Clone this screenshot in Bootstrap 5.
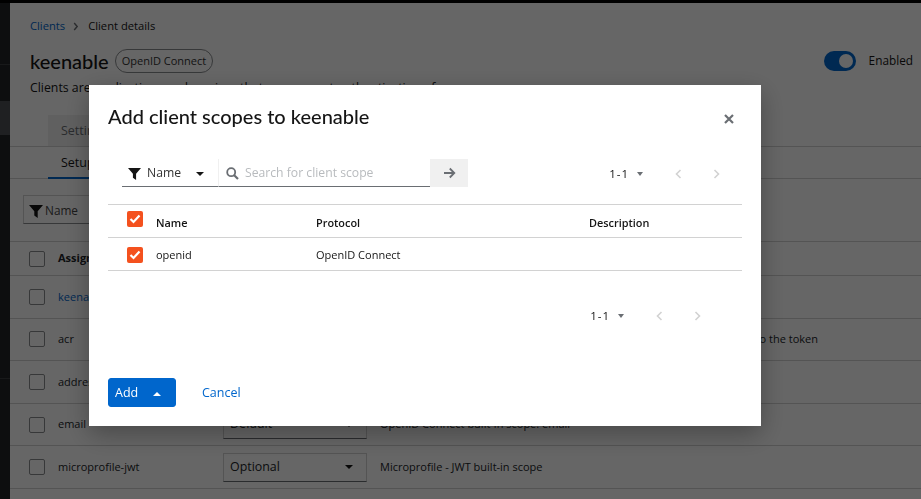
<!DOCTYPE html>
<html lang="en">
<head>
<meta charset="UTF-8">
<meta name="viewport" content="width=device-width, initial-scale=1.0">
<title>Client details</title>
<link href="https://cdn.jsdelivr.net/npm/bootstrap@5.3.3/dist/css/bootstrap.min.css" rel="stylesheet">
<style>
html, body { height: 100%; overflow: hidden; }
body { font-family: "Open Sans", "Liberation Sans", sans-serif; font-size: 12px; color: #151515; background: #fff; }
.top-strip { height: 3px; background: #000; }
.side-nav { width: 10px; background: #212427; flex: none; height: 496px; }
.side-line { border-bottom: 1px solid #3c3f42; height: 62px; }
.side-active { background: #4f5255; height: 34px; margin-top: 36px; }
.side-line-low { border-bottom: 1px solid #3c3f42; height: 244px; }
.page-main { flex: 1 1 auto; min-width: 0; }
.crumbs { padding: 9px 0 0 20px; height: 37px; font-size: 11.2px; line-height: 16px; display: flex; align-items: center; }
.crumbs a, .link-cell { color: #06c; text-decoration: none; }
.crumb-sep { margin: 0 9px 0 8px; line-height: 0; }
.title-row { padding: 7px 8px 0 20px; height: 35px; }
.client-name { font-family: "Lato", sans-serif; font-size: 20px; font-weight: 500; line-height: 24px; margin: 0; }
.client-tag { border: 1px solid #8a8d90; border-radius: 12px; padding: 3px 6px; height: 24px; margin-left: -2px; font-size: 11px; line-height: 16px; color: #333; }
.enable-switch { width: 32px; height: 20px; border-radius: 10px; background: #06c; position: relative; margin-right: 2px; }
.enable-switch::after { content: ""; position: absolute; width: 14px; height: 14px; border-radius: 50%; background: #fff; top: 3px; right: 3px; }
.enable-text { font-size: 11.8px; margin-left: 3px; }
.subtitle { padding: 5px 0 0 20px; height: 40px; line-height: 16px; font-size: 12.3px; white-space: nowrap; }
.tabs-main { border-bottom: 1px solid #d2d2d2; height: 32px; padding-left: 38px; }
.tab-soft { background: #f0f0f0; color: #6a6e73; width: 120px; height: 31px; padding: 7px 13px; font-size: 12.5px; }
.tabs-sub { border-bottom: 1px solid #d2d2d2; height: 32px; padding-left: 38px; }
.tab-on { border-bottom: 2px solid #06c; width: 120px; height: 32px; padding: 7px 13px; font-size: 12.5px; }
.bg-filter { margin: 16px 0 0 13px; width: 120px; height: 29px; border: 1px solid #d2d2d2; border-bottom-color: #8a8d90; display: flex; align-items: center; gap: 2px; padding: 2px 0 0 5px; font-size: 11.8px; color: #444; }
.bg-table { margin: 17px 0 0; table-layout: fixed; width: 100%; --bs-table-bg: transparent; }
.bg-table td { height: 42.6px; padding: 0; vertical-align: middle; border-color: #d2d2d2; border-width: 0 0 1px; font-size: 11px; white-space: nowrap; }
.bg-table tr:first-child td { height: 34px; border-top-width: 1px; }
.bg-table td:first-child { width: 48px; padding-left: 19px; }
.bg-table td:nth-child(2) { width: 165px; }
.bg-table td:nth-child(3) { width: 157px; }
.bg-table td.end-note { text-align: right; padding-right: 103px; }
.plain-box { display: block; width: 16px; height: 16px; border: 1px solid #8a8d90; border-radius: 2px; background: #fff; }
.scope-select { width: 144px; height: 29px; border: 1px solid #d2d2d2; border-bottom-color: #6a6e73; display: flex; align-items: center; justify-content: space-between; padding: 0 13px 0 6px; font-size: 12.4px; }
.caret-down { width: 0; height: 0; border-left: 4px solid transparent; border-right: 4px solid transparent; border-top: 4px solid #151515; display: inline-block; }
.caret-up { width: 0; height: 0; border-left: 4px solid transparent; border-right: 4px solid transparent; border-bottom: 4px solid #fff; display: inline-block; }
.caret-soft { border-left-width: 3.5px; border-right-width: 3.5px; border-top-color: #6a6e73; }
.modal-backdrop.dim-layer { opacity: .6; background: #000; }
.scopes-dialog { max-width: 672px; width: 672px; margin: 85px 0 0 89px; }
.scopes-box { border: 0; border-radius: 0; height: 341px; padding: 0 19px; box-shadow: 0 8px 24px rgba(0,0,0,.3); }
.scopes-head { padding-top: 19px; height: 74px; }
.scopes-title { font-family: "Lato", sans-serif; font-size: 20px; font-weight: 500; line-height: 24px; margin: 0; color: #151515; }
.x-btn { margin: 10px 8px 0 0; line-height: 0; }
.scope-tools { height: 45px; padding-left: 14px; }
.filter-pick { width: 97px; height: 28px; border-bottom: 1px solid #6a6e73; border-right: 1px solid #f0f0f0; display: flex; align-items: center; padding: 2px 0 0 6px; font-size: 12.2px; color: #333; }
.filter-pick span.nm { margin: 0 15px 0 6px; }
.search-field { width: 211px; height: 28px; border-bottom: 1px solid #6a6e73; display: flex; align-items: center; padding: 2px 0 0 7px; gap: 6px; font-size: 12.2px; color: #b8bbbe; }
.go-btn { width: 38px; height: 28px; background: #f0f0f0; display: flex; align-items: center; justify-content: center; }
.pager { display: flex; align-items: center; font-size: 11.5px; color: #151515; }
.pager .cnt { letter-spacing: 1px; margin-right: 8px; }
.pager .prev { margin-left: 32px; }
.pager .next { margin-left: 31px; }
.pager-top { margin-left: auto; margin-right: 22px; margin-top: 6px; }
.pager-low { justify-content: flex-end; margin: 37px 41px 0 0; height: 16px; }
.scope-table { margin: 0; width: 634px; table-layout: fixed; --bs-table-bg: transparent; }
.scope-table th, .scope-table td { padding: 0; border-color: #d2d2d2; border-width: 0 0 1px; font-size: 11px; color: #151515; vertical-align: middle; }
.scope-table th { height: 33px; border-top-width: 1px; font-weight: 600; padding-top: 4px; font-size: 10.9px; }
.scope-table td { height: 33px; padding-top: 2px; }
.scope-table th:first-child, .scope-table td:first-child { width: 48px; padding-left: 19px; }
.scope-table th:nth-child(2) { width: 160px; }
.scope-table th:nth-child(3) { width: 273px; }
.scope-table th:first-child { padding-top: 0; padding-bottom: 4px; }
.tick-box { display: block; width: 16px; height: 16px; background: #f4511e; border-radius: 2px; line-height: 0; padding: 3px 2px; }
.scope-actions { margin-top: 54px; gap: 26px; }
.add-btn { --bs-btn-bg: #06c; --bs-btn-border-color: #06c; --bs-btn-color: #fff; --bs-btn-font-size: 12.5px; --bs-btn-border-radius: 3px; width: 68px; height: 29px; padding: 2px 0 0 6px; display: flex; align-items: center; gap: 15px; justify-content: flex-start; }
.cancel-link { color: #06c; text-decoration: none; font-size: 12.5px; padding-top: 2px; }
</style>
</head>
<body>
<div class="top-strip"></div>
<div class="d-flex">
    <div class="side-nav">
        <div class="side-line"></div>
        <div class="side-active"></div>
        <div class="side-line-low"></div>
    </div>
    <div class="page-main">
        <div class="crumbs"><a href="#">Clients</a><span class="crumb-sep"><svg width="6" height="9" viewBox="0 0 6 9"><path d="M1.2 1l3 3.5-3 3.5" fill="none" stroke="#6a6e73" stroke-width="1.4"/></svg></span>Client details</div>
        <div class="title-row d-flex align-items-center gap-2">
            <h1 class="client-name">keenable</h1>
            <span class="client-tag">OpenID Connect</span>
            <span class="enable-switch ms-auto"></span>
            <span class="enable-text">Enabled</span>
        </div>
        <div class="subtitle">Clients are applications and services that can request authentication of a user.</div>
        <div class="tabs-main"><div class="tab-soft">Settings</div></div>
        <div class="tabs-sub"><div class="tab-on">Setup</div></div>
        <div class="bg-filter">
            <svg width="14" height="14" viewBox="0 0 14 14"><path d="M0 1h14L8.7 7.2V14L5.3 11.5V7.2z" fill="#151515"/></svg>
            Name
        </div>
        <table class="table bg-table">
            <tr><td><span class="plain-box"></span></td><td><b>Assigned</b></td><td></td><td></td></tr>
            <tr><td><span class="plain-box"></span></td><td><a class="link-cell" href="#">keenable-dedicated</a></td><td></td><td></td></tr>
            <tr><td><span class="plain-box"></span></td><td>acr</td><td></td><td class="end-note">Add acr (authentication context class reference) to the token</td></tr>
            <tr><td><span class="plain-box"></span></td><td>address</td><td></td><td></td></tr>
            <tr><td><span class="plain-box"></span></td><td>email</td><td><div class="scope-select">Default<i class="caret-down"></i></div></td><td>OpenID Connect built-in scope: email</td></tr>
            <tr><td><span class="plain-box"></span></td><td>microprofile-jwt</td><td><div class="scope-select">Optional<i class="caret-down"></i></div></td><td>Microprofile - JWT built-in scope</td></tr>
        </table>
    </div>
</div>

<div class="modal-backdrop dim-layer"></div>
<div class="modal d-block">
    <div class="modal-dialog scopes-dialog">
        <div class="modal-content scopes-box">
            <div class="scopes-head d-flex justify-content-between align-items-start">
                <h2 class="scopes-title">Add client scopes to keenable</h2>
                <span class="x-btn">
                    <svg width="10" height="10" viewBox="0 0 10 10"><path d="M1 1l8 8M9 1l-8 8" stroke="#6a6e73" stroke-width="2.2"/></svg>
                </span>
            </div>
            <div class="scope-tools d-flex align-items-start">
                <div class="filter-pick">
                    <svg width="13" height="13" viewBox="0 0 14 14"><path d="M0 1h14L8.7 7.2V14L5.3 11.5V7.2z" fill="#151515"/></svg>
                    <span class="nm">Name</span><i class="caret-down"></i>
                </div>
                <div class="search-field">
                    <svg width="13" height="13" viewBox="0 0 13 13"><circle cx="5.2" cy="5.2" r="4" fill="none" stroke="#6a6e73" stroke-width="1.8"/><path d="M8.2 8.2L12 12" stroke="#6a6e73" stroke-width="2.2"/></svg>
                    Search for client scope
                </div>
                <div class="go-btn">
                    <svg width="13" height="12" viewBox="0 0 13 12"><path d="M1 6h10M6.8 1.5L11.3 6 6.8 10.5" fill="none" stroke="#6a6e73" stroke-width="1.8"/></svg>
                </div>
                <div class="pager pager-top">
                    <span class="cnt">1-1</span><i class="caret-down caret-soft"></i>
                    <svg class="prev" width="7" height="10" viewBox="0 0 7 10"><path d="M5.5 1L1.5 5l4 4" fill="none" stroke="#d2d2d2" stroke-width="1.6"/></svg>
                    <svg class="next" width="7" height="10" viewBox="0 0 7 10"><path d="M1.5 1l4 4-4 4" fill="none" stroke="#d2d2d2" stroke-width="1.6"/></svg>
                </div>
            </div>
            <table class="table scope-table">
                <tr>
                    <th><span class="tick-box"><svg width="12" height="10" viewBox="0 0 12 10"><path d="M1.5 5l3 3 6-6.5" fill="none" stroke="#fff" stroke-width="2.2"/></svg></span></th>
                    <th>Name</th><th>Protocol</th><th>Description</th>
                </tr>
                <tr>
                    <td><span class="tick-box"><svg width="12" height="10" viewBox="0 0 12 10"><path d="M1.5 5l3 3 6-6.5" fill="none" stroke="#fff" stroke-width="2.2"/></svg></span></td>
                    <td>openid</td><td>OpenID Connect</td><td></td>
                </tr>
            </table>
            <div class="pager pager-low">
                <span class="cnt">1-1</span><i class="caret-down caret-soft"></i>
                <svg class="prev" width="7" height="10" viewBox="0 0 7 10"><path d="M5.5 1L1.5 5l4 4" fill="none" stroke="#d2d2d2" stroke-width="1.6"/></svg>
                <svg class="next" width="7" height="10" viewBox="0 0 7 10"><path d="M1.5 1l4 4-4 4" fill="none" stroke="#d2d2d2" stroke-width="1.6"/></svg>
            </div>
            <div class="scope-actions d-flex align-items-center">
                <button type="button" class="btn add-btn">Add <i class="caret-up"></i></button>
                <a class="cancel-link" href="#">Cancel</a>
            </div>
        </div>
    </div>
</div>
<script src="https://cdn.jsdelivr.net/npm/bootstrap@5.3.3/dist/js/bootstrap.bundle.min.js"></script>
</body>
</html>
